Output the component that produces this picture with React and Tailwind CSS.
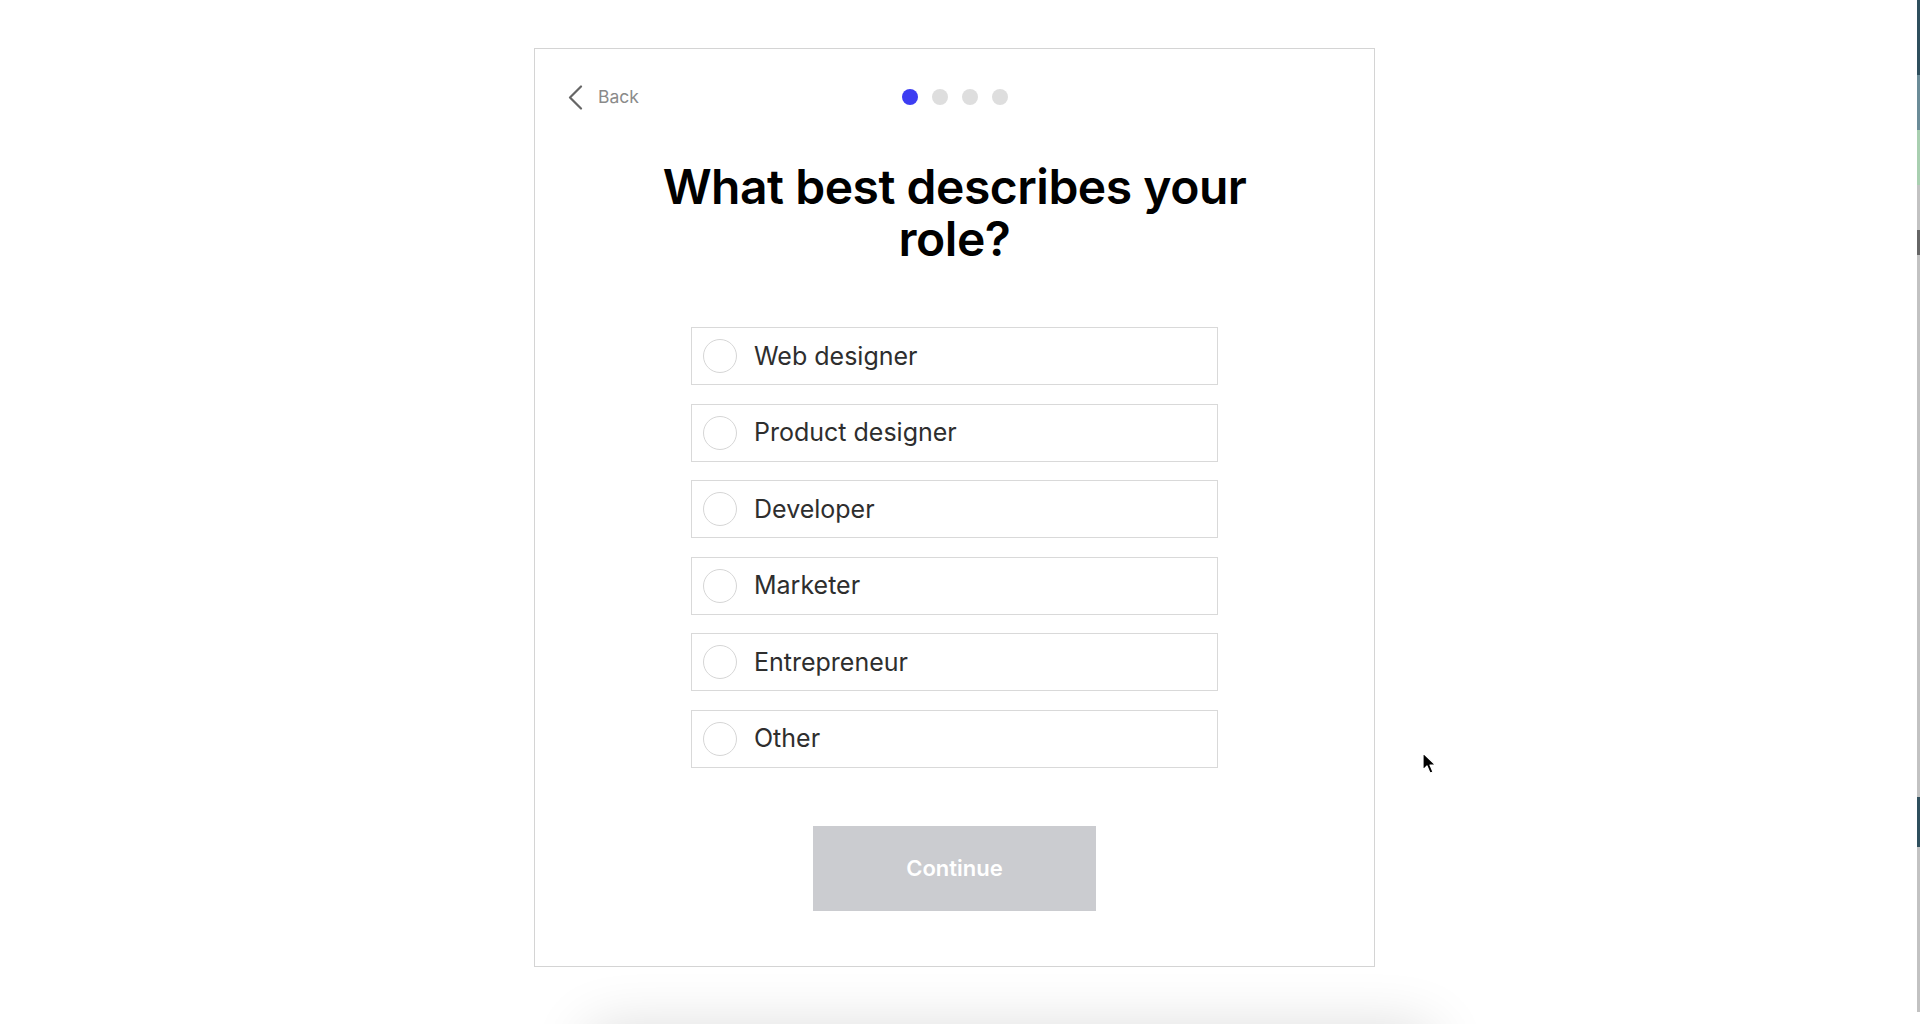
import React from 'react';

const roles = ['Web designer', 'Product designer', 'Developer', 'Marketer', 'Entrepreneur', 'Other'];

function BackChevron() {
  return (
    <svg width="15" height="25" viewBox="0 0 15 25" fill="none">
      <polyline points="13,1.5 2,12.5 13,23.5" stroke="#666" strokeWidth="2.2" strokeLinecap="round" strokeLinejoin="round" />
    </svg>
  );
}

function Cursor() {
  return (
    <svg width="16" height="24" viewBox="0 0 16 24">
      <path d="M1 1 L1 18 L5 14 L8 21 L11 20 L8 13 L13.5 13 Z" fill="#000" stroke="#fff" strokeWidth="1.2" strokeLinejoin="round" />
    </svg>
  );
}

export default function App() {
  return (
    <div className="relative h-[1024px] overflow-hidden bg-white font-['Inter',sans-serif]">
      <div className="flex justify-center pr-[11px] pt-[48px]">
        <div className="flex h-[919px] w-[841px] flex-col items-center border border-[#d4d4d4] bg-white">
          {/* top bar */}
          <div className="grid w-full grid-cols-[1fr_auto_1fr] items-center px-[33px] pt-[35px]">
            <button className="flex items-center gap-[15px] text-[17.5px] text-[#8a8a8a]">
              <BackChevron />
              <span>Back</span>
            </button>
            <div className="flex items-center gap-[14px]">
              <span className="h-4 w-4 rounded-full bg-[#3d3df2]"></span>
              <span className="h-4 w-4 rounded-full bg-[#dedede]"></span>
              <span className="h-4 w-4 rounded-full bg-[#dedede]"></span>
              <span className="h-4 w-4 rounded-full bg-[#dedede]"></span>
            </div>
            <div></div>
          </div>

          <h1 className="mt-[51px] max-w-[640px] text-center text-[48px] font-semibold leading-[52px] tracking-[-0.01em] text-black">
            What best describes your role?
          </h1>

          <div className="mt-[62px] flex flex-col gap-[18.5px]">
            {roles.map((role) => (
              <label key={role} className="flex h-[58px] w-[527px] items-center gap-[17px] border border-[#d9d9d9] pl-[11px]">
                <span className="h-[34px] w-[34px] rounded-full border border-[#d6d6d6]"></span>
                <span className="text-[25px] text-[#2e2e2e]">{role}</span>
              </label>
            ))}
          </div>

          <button className="mt-[58px] h-[85px] w-[283px] bg-[#cbccd0] text-[22px] font-semibold text-white">
            Continue
          </button>
        </div>
      </div>

      {/* next card peeking below */}
      <div className="ml-[590px] mt-[63px] h-[60px] w-[840px] bg-white shadow-[0_0_60px_rgba(0,0,0,0.16)]"></div>

      {/* window edge strip */}
      <div className="absolute right-0 top-0 flex h-[1012px] w-[3px] flex-col bg-[#c2c2c2]">
        <div className="h-[75px] bg-[#2f4f5d]"></div>
        <div className="h-[55px] bg-[#6b8c98]"></div>
        <div className="h-[55px] bg-[#a9cfb0]"></div>
        <div className="h-[45px]"></div>
        <div className="h-[25px] bg-[#666]"></div>
        <div className="h-[542px]"></div>
        <div className="h-[50px] bg-[#2f4f5d]"></div>
      </div>

      <div className="absolute left-[1422px] top-[752px]">
        <Cursor />
      </div>
    </div>
  );
}
